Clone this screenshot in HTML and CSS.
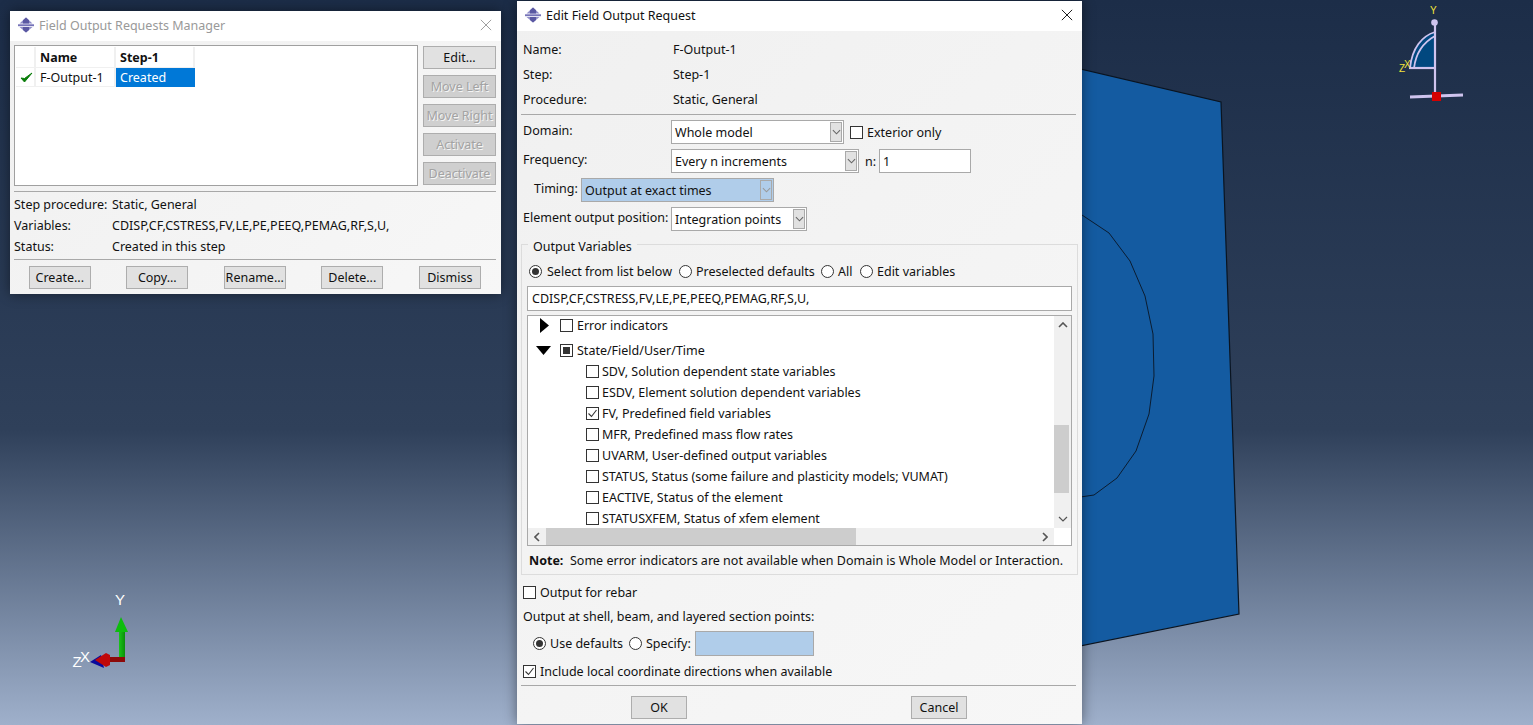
FILE: index.html
```html
<!DOCTYPE html>
<html lang="en">
<head>
    <meta charset="UTF-8">
    <title>Field Output Requests</title>
    <link rel="stylesheet" href="styles.css">
</head>
<body>

<svg width="0" height="0" class="defs">
    <symbol id="app-icon" viewBox="0 0 16 16">
        <path d="M8 0.5 L14.5 6.5 H1.5 Z" fill="#8f8dc8"/>
        <path d="M8 15.5 L14.5 10 H1.5 Z" fill="#8f8dc8"/>
        <path d="M8 0.5 L11 3.3 V6.5 H5 V3.3 Z" fill="#5a58a2"/>
        <path d="M8 15.5 L11 13 V10 H5 V13 Z" fill="#5a58a2"/>
        <rect x="0" y="7.3" width="16" height="1.9" fill="#7573b8"/>
    </symbol>
    <symbol id="chev-down" viewBox="0 0 10 6">
        <path d="M1 1 L5 5 L9 1" fill="none" stroke="currentColor" stroke-width="1.2"/>
    </symbol>
    <symbol id="chev-up" viewBox="0 0 10 6">
        <path d="M1 5 L5 1 L9 5" fill="none" stroke="currentColor" stroke-width="1.6"/>
    </symbol>
    <symbol id="chev-left" viewBox="0 0 6 10">
        <path d="M5 1 L1 5 L5 9" fill="none" stroke="currentColor" stroke-width="1.6"/>
    </symbol>
    <symbol id="chev-right" viewBox="0 0 6 10">
        <path d="M1 1 L5 5 L1 9" fill="none" stroke="currentColor" stroke-width="1.6"/>
    </symbol>
    <symbol id="tick" viewBox="0 0 11 11">
        <path d="M1.5 5.5 L4.5 8.5 L9.5 2" fill="none" stroke="#333" stroke-width="1.1"/>
    </symbol>
    <symbol id="cross" viewBox="0 0 14 14">
        <path d="M1 1 L13 13 M13 1 L1 13" fill="none" stroke="currentColor" stroke-width="1.1"/>
    </symbol>
    <linearGradient id="shaft" x1="0" x2="1" y1="0" y2="0">
        <stop offset="0" stop-color="#19c419"/>
        <stop offset="1" stop-color="#0a8f0a"/>
    </linearGradient>
</svg>

<!-- viewport: plate and the two triads -->
<svg class="viewport" width="1533" height="725" viewBox="0 0 1533 725">
    <polygon points="1000,50 1221,102 1239,614 1000,662" fill="#145ba1" stroke="#0a1420" stroke-width="1.2"/>
    <polyline points="1060,205 1082,215 1109,233 1130,261 1145,296 1153,334 1154,376 1149,414 1136,451 1117,478 1094,495 1060,500" fill="none" stroke="#0b1c30" stroke-width="1"/>

    <path d="M1410 68 C1412 48 1422 36 1435 32 V68 Z" fill="#01487f"/>
    <path d="M1410 68 C1412 48 1422 36 1435 32 M1414 68 C1416 52 1424 42 1435 36" fill="none" stroke="#cfc4ee" stroke-width="1.8"/>
    <path d="M1409 68 H1436" stroke="#cfc4ee" stroke-width="2.2"/>
    <path d="M1435 24 V96" stroke="#cfc4ee" stroke-width="2.2"/>
    <circle cx="1434.5" cy="22.5" r="3.3" fill="#cfc4ee"/>
    <path d="M1410 97 L1463 95" stroke="#cfc4ee" stroke-width="2.8"/>
    <rect x="1432" y="92" width="9" height="9" fill="#d40000"/>
    <text x="1430" y="14" class="axis-small">Y</text>
    <text x="1399" y="72" class="axis-small">Z</text>
    <text x="1404" y="68" class="axis-small">X</text>

    <path d="M119 630 H125 V660 H119 Z" fill="url(#shaft)"/>
    <path d="M121 617 L128 632 H115 Z" fill="#0dbd0d"/>
    <path d="M106 657 H125 V662 H106 Z" fill="#8c0a0a"/>
    <path d="M90 662 L101 655 L104 668 Z" fill="#0a0a9c"/>
    <path d="M95 660 L106 653 L110 655 V665 L106 667 Z" fill="#c00808"/>
    <text x="120" y="605" class="axis-big">Y</text>
    <text x="77" y="667" class="axis-big">Z</text>
    <text x="85" y="662" class="axis-big">X</text>
</svg>

<!-- manager window -->
<div class="win manager">
    <div class="titlebar inactive">
        <svg class="app-icon"><use href="#app-icon"/></svg>
        <span>Field Output Requests Manager</span>
        <svg class="close"><use href="#cross"/></svg>
    </div>
    <div class="win-body">
        <div class="mgr-top">
            <div class="mgr-table">
                <div class="mgr-row head">
                    <div class="cell c-flag"></div>
                    <div class="cell c-name">Name</div>
                    <div class="cell c-step">Step-1</div>
                </div>
                <div class="mgr-row">
                    <div class="cell c-flag">
                        <svg width="13" height="11" viewBox="0 0 13 11"><path d="M1 6 L4.5 10 L12 1 L4.5 6.5 Z" fill="#0a7d0a" stroke="#0a7d0a"/></svg>
                    </div>
                    <div class="cell c-name">F-Output-1</div>
                    <div class="cell c-step selected">Created</div>
                </div>
            </div>
            <div class="mgr-actions">
                <button class="btn">Edit...</button>
                <button class="btn off">Move Left</button>
                <button class="btn off">Move Right</button>
                <button class="btn off">Activate</button>
                <button class="btn off">Deactivate</button>
            </div>
        </div>
        <div class="sep"></div>
        <div class="mgr-info">
            <div class="info-row"><span class="info-label">Step procedure:</span><span>Static, General</span></div>
            <div class="info-row"><span class="info-label">Variables:</span><span>CDISP,CF,CSTRESS,FV,LE,PE,PEEQ,PEMAG,RF,S,U,</span></div>
            <div class="info-row"><span class="info-label">Status:</span><span>Created in this step</span></div>
        </div>
        <div class="sep"></div>
        <div class="mgr-buttons">
            <button class="btn">Create...</button>
            <button class="btn">Copy...</button>
            <button class="btn">Rename...</button>
            <button class="btn">Delete...</button>
            <button class="btn">Dismiss</button>
        </div>
    </div>
</div>

<!-- edit window -->
<div class="win editor">
    <div class="titlebar">
        <svg class="app-icon"><use href="#app-icon"/></svg>
        <span>Edit Field Output Request</span>
        <svg class="close"><use href="#cross"/></svg>
    </div>
    <div class="win-body">
        <div class="ed-info">
            <div class="ed-info-row"><span class="ed-label wide">Name:</span><span>F-Output-1</span></div>
            <div class="ed-info-row"><span class="ed-label wide">Step:</span><span>Step-1</span></div>
            <div class="ed-info-row"><span class="ed-label wide">Procedure:</span><span>Static, General</span></div>
        </div>
        <div class="sep"></div>

        <div class="ed-form">
            <div class="form-row">
                <span class="ed-label lift">Domain:</span>
                <div class="combo w-domain"><span>Whole model</span><i class="combo-arrow"><svg><use href="#chev-down"/></svg></i></div>
                <span class="cb exterior"></span><span>Exterior only</span>
            </div>
            <div class="form-row">
                <span class="ed-label lift">Frequency:</span>
                <div class="combo w-freq"><span>Every n increments</span><i class="combo-arrow"><svg><use href="#chev-down"/></svg></i></div>
                <span class="n-label">n:</span>
                <div class="field w-n">1</div>
            </div>
            <div class="form-row">
                <span class="timing-label lift">Timing:</span>
                <div class="combo w-timing blocked"><span>Output at exact times</span><i class="combo-arrow"><svg><use href="#chev-down"/></svg></i></div>
            </div>
            <div class="form-row">
                <span class="ed-label lift">Element output position:</span>
                <div class="combo w-pos"><span>Integration points</span><i class="combo-arrow"><svg><use href="#chev-down"/></svg></i></div>
            </div>
        </div>

        <div class="group">
            <div class="group-title">Output Variables</div>
            <div class="radio-row">
                <span class="radio on"></span><span class="opt">Select from list below</span>
                <span class="radio"></span><span class="opt">Preselected defaults</span>
                <span class="radio"></span><span class="opt">All</span>
                <span class="radio"></span><span class="opt">Edit variables</span>
            </div>
            <div class="field w-vars">CDISP,CF,CSTRESS,FV,LE,PE,PEEQ,PEMAG,RF,S,U,</div>
            <div class="list">
                <div class="tree">
                    <div class="tree-head first">
                        <span class="tw"><svg width="9" height="15" viewBox="0 0 9 15"><path d="M0 0 L9 7.5 L0 15 Z"/></svg></span>
                        <span class="cb"></span><span>Error indicators</span>
                    </div>
                    <div class="tree-head second">
                        <span class="tw"><svg width="15" height="9" viewBox="0 0 15 9"><path d="M0 0 H15 L7.5 9 Z"/></svg></span>
                        <span class="cb partial"></span><span>State/Field/User/Time</span>
                    </div>
                    <div class="tree-item"><span class="cb"></span><span>SDV, Solution dependent state variables</span></div>
                    <div class="tree-item"><span class="cb"></span><span>ESDV, Element solution dependent variables</span></div>
                    <div class="tree-item"><span class="cb"><svg><use href="#tick"/></svg></span><span>FV, Predefined field variables</span></div>
                    <div class="tree-item"><span class="cb"></span><span>MFR, Predefined mass flow rates</span></div>
                    <div class="tree-item"><span class="cb"></span><span>UVARM, User-defined output variables</span></div>
                    <div class="tree-item"><span class="cb"></span><span>STATUS, Status (some failure and plasticity models; VUMAT)</span></div>
                    <div class="tree-item"><span class="cb"></span><span>EACTIVE, Status of the element</span></div>
                    <div class="tree-item"><span class="cb"></span><span>STATUSXFEM, Status of xfem element</span></div>
                </div>
                <div class="vscroll">
                    <svg class="arr-v"><use href="#chev-up"/></svg>
                    <div class="vtrack"><div class="vthumb"></div></div>
                    <svg class="arr-v"><use href="#chev-down"/></svg>
                </div>
                <div class="hscroll">
                    <svg class="arr-h"><use href="#chev-left"/></svg>
                    <div class="htrack"><div class="hthumb"></div></div>
                    <svg class="arr-h"><use href="#chev-right"/></svg>
                </div>
            </div>
            <div class="note"><b>Note:</b><span>Some error indicators are not available when Domain is Whole Model or Interaction.</span></div>
        </div>

        <div class="check-row rebar"><span class="cb"></span><span>Output for rebar</span></div>
        <div class="shell-label">Output at shell, beam, and layered section points:</div>
        <div class="shell-row">
            <span class="radio on"></span><span class="opt">Use defaults</span>
            <span class="radio"></span><span class="opt-tight">Specify:</span>
            <div class="field w-specify blocked"></div>
        </div>
        <div class="check-row local"><span class="cb"><svg><use href="#tick"/></svg></span><span>Include local coordinate directions when available</span></div>
        <div class="sep"></div>
        <div class="ed-buttons">
            <button class="btn">OK</button>
            <button class="btn">Cancel</button>
        </div>
    </div>
</div>

</body>
</html>
```

FILE: styles.css
```css
* {
    box-sizing: border-box;
}
html, body {
    margin: 0;
    height: 100%;
}
body {
    width: 1533px;
    height: 725px;
    overflow: hidden;
    position: relative;
    font-family: "Noto Sans", sans-serif;
    font-size: 12.5px;
    color: #111;
    background: linear-gradient(180deg, #1c2d48 0px, #2f405a 430px, #9fb0cb 725px);
}
.defs {
    position: absolute;
}
.viewport {
    position: absolute;
    left: 0;
    top: 0;
}
.axis-small {
    font-family: "Liberation Sans", sans-serif;
    font-size: 10px;
    fill: #f2e33a;
}
.axis-big {
    font-family: "Liberation Sans", sans-serif;
    font-size: 15px;
    fill: #fff;
    text-anchor: middle;
}

/* windows */
.win {
    position: absolute;
    display: flex;
    flex-direction: column;
    background: linear-gradient(135deg, #f0f0f0, #f7f7f7);
    box-shadow: 0 0 12px rgba(0, 0, 0, 0.45);
}
.manager {
    left: 10px;
    top: 11px;
    width: 491px;
    height: 283px;
}
.editor {
    left: 517px;
    top: 1px;
    width: 565px;
    height: 723px;
}
.titlebar {
    height: 30px;
    background: white;
    display: flex;
    align-items: center;
    flex: none;
    padding: 0 8px 2px;
    font-size: 12.5px;
}
.titlebar.inactive {
    color: #999;
}
.app-icon {
    width: 16px;
    height: 16px;
    margin-right: 5px;
    flex: none;
}
.close {
    margin-left: auto;
    width: 12px;
    height: 12px;
    margin-right: 1px;
    color: #111;
}
.inactive .close {
    color: #999;
}
.sep {
    height: 1px;
    background: #a8a8a8;
}
.btn {
    display: block;
    height: 23px;
    padding: 0;
    border: 1px solid #adadad;
    background: #e1e1e1;
    font-family: inherit;
    font-size: 12.5px;
    color: #111;
}
.btn.off {
    color: #a3a3a3;
    background: #cfcfcf;
    text-shadow: 1px 1px 0 #f5f5f5;
}

/* manager */
.manager .win-body {
    padding: 4px 5px 0 4px;
}
.mgr-top {
    display: flex;
    justify-content: space-between;
    margin-bottom: 5px;
}
.mgr-table {
    width: 404px;
    height: 141px;
    border: 1px solid #a0a0a0;
    background: white;
    padding: 1px 1px;
}
.mgr-row {
    display: flex;
    height: 19px;
}
.mgr-row.head {
    height: 21px;
    font-weight: bold;
}
.cell {
    padding-left: 4px;
    display: flex;
    align-items: center;
    border-right: 2px solid #f0f0f0;
    border-bottom: 1px solid #f0f0f0;
}
.c-flag {
    width: 20px;
}
.c-name {
    width: 80px;
}
.c-step {
    width: 79px;
}
.c-step.selected {
    background: #0078d7;
    color: white;
    border: none;
}
.mgr-actions {
    width: 73px;
    display: flex;
    flex-direction: column;
    gap: 6px;
    padding-top: 1px;
}
.mgr-info {
    padding: 2px 0;
}
.info-row {
    height: 21px;
    display: flex;
    align-items: center;
}
.info-label {
    width: 98px;
}
.mgr-buttons {
    display: flex;
    justify-content: space-between;
    padding: 6px 15.2px 0 14.8px;
}
.mgr-buttons .btn {
    width: 62px;
}

/* editor */
.editor .win-body {
    padding: 6px 6px 0 6px;
}
.editor .sep {
    margin: 0 0 0 -2px;
    width: 555px;
}
.ed-info-row {
    height: 25px;
    display: flex;
    align-items: center;
}
.ed-info {
    margin-bottom: 2px;
}
.ed-label {
    width: 148px;
    flex: none;
}
.ed-label.wide {
    width: 150px;
}
.ed-form {
    padding-top: 5px;
    display: flex;
    flex-direction: column;
    gap: 5px;
}
.form-row {
    display: flex;
    align-items: center;
    height: 24px;
}
.lift {
    padding-bottom: 4px;
}
.timing-label {
    width: 47px;
    margin-left: 11px;
    flex: none;
}
.combo, .field {
    background: white;
    border: 1px solid #a9a9a9;
    display: flex;
    align-items: center;
    height: 24px;
    padding-left: 3px;
}
.combo {
    justify-content: space-between;
    padding-right: 1px;
}
.combo-arrow {
    width: 12px;
    height: 20px;
    background: #e1e1e1;
    border: 1px solid #a9a9a9;
    color: #666;
    display: flex;
    align-items: center;
    justify-content: center;
}
.combo-arrow svg {
    width: 9px;
    height: 6px;
}
.blocked {
    background: #b0cdea;
}
.blocked .combo-arrow {
    background: #b0cdea;
    color: #999;
}
.w-domain {
    width: 173px;
}
.w-freq {
    width: 188px;
}
.w-timing {
    width: 193px;
}
.w-pos {
    width: 136px;
}
.w-n {
    width: 92px;
}
.n-label {
    margin: 0 3px 0 6px;
}
.exterior {
    margin: 0 5px 0 6px;
}

/* checks and radios */
.cb {
    width: 13px;
    height: 13px;
    border: 1px solid #333;
    background: white;
    flex: none;
    display: inline-block;
    margin-right: 4px;
    position: relative;
}
.cb svg {
    display: block;
    width: 11px;
    height: 11px;
}
.cb.partial::after {
    content: "";
    position: absolute;
    left: 2px;
    top: 2px;
    width: 7px;
    height: 7px;
    background: #333;
}
.radio {
    width: 13px;
    height: 13px;
    border: 1px solid #333;
    border-radius: 50%;
    background: white;
    flex: none;
    display: flex;
    align-items: center;
    justify-content: center;
}
.radio.on::after {
    content: "";
    width: 7px;
    height: 7px;
    border-radius: 50%;
    background: #333;
}
.opt {
    margin: 0 6px 0 4px;
}
.opt-tight {
    margin: 0 4px 0 4px;
}

/* group */
.group {
    position: relative;
    margin: 13px 0 0 -2px;
    width: 557px;
    height: 331px;
    border: 1px solid #dcdcdc;
    padding: 17px 5px 0;
}
.group-title {
    position: absolute;
    left: 6px;
    top: -5px;
    padding: 0 5px;
    line-height: 14px;
    background: #f2f2f2;
}
.radio-row {
    display: grid;
    grid-template-columns: 13px 137px 13px 129px 13px 26px 13px auto;
    align-items: center;
    height: 19px;
    padding-left: 2px;
}
.radio-row .opt {
    margin: 0 0 0 4px;
}
.radio-row .radio.on + .opt {
    margin-left: 5px;
}
.w-vars {
    width: 545px;
    height: 25px;
    margin-top: 5px;
    padding-left: 4px;
}
.list {
    width: 545px;
    height: 231px;
    margin-top: 4px;
    border: 1px solid #a9a9a9;
    background: white;
    display: grid;
    grid-template-columns: 1fr 17px;
    grid-template-rows: 1fr 17px;
}
.tree {
    overflow: hidden;
    grid-column: 1;
    grid-row: 1;
}
.tree-head {
    display: flex;
    align-items: center;
    height: 19px;
}
.tree-head.second {
    margin: 6px 0 1px;
}
.tw {
    width: 32px;
    flex: none;
    display: flex;
    justify-content: center;
    padding-right: 2px;
}
.first .tw {
    padding-right: 0;
}
.tree-item {
    display: flex;
    align-items: center;
    height: 21px;
    padding-left: 58px;
    white-space: nowrap;
}
.tree-item .cb {
    margin-right: 3px;
}
.vscroll {
    grid-column: 2;
    grid-row: 1;
    background: #f0f0f0;
    display: flex;
    flex-direction: column;
    color: #555;
}
.arr-v {
    width: 10px;
    height: 6px;
    margin: 6px auto;
    flex: none;
    overflow: visible;
}
.vtrack {
    flex: 1;
    padding-top: 91px;
}
.vthumb {
    width: 15px;
    height: 68px;
    background: #cdcdcd;
}
.hscroll {
    grid-column: 1;
    grid-row: 2;
    background: #f0f0f0;
    display: flex;
    align-items: center;
    color: #555;
}
.arr-h {
    width: 6px;
    height: 10px;
    margin: 0 6px;
    flex: none;
}
.htrack {
    flex: 1;
    height: 100%;
}
.hthumb {
    width: 310px;
    height: 100%;
    background: #cdcdcd;
}
.note {
    display: flex;
    align-items: center;
    height: 28px;
    padding-left: 2px;
}
.note b {
    width: 41px;
    flex: none;
}

/* below the group */
.check-row {
    display: flex;
    align-items: center;
    height: 18px;
}
.rebar {
    margin-top: 8px;
}
.shell-label {
    height: 18px;
    line-height: 18px;
    margin-top: 7px;
}
.shell-row {
    display: flex;
    align-items: center;
    height: 25px;
    margin-top: 5px;
    padding-left: 10px;
}
.w-specify {
    width: 119px;
    height: 25px;
}
.local {
    margin-top: 6px;
}
.editor .local + .sep {
    margin-top: 5px;
}
.ed-buttons {
    display: flex;
    padding: 10px 0 0 108px;
    gap: 224px;
}
.ed-buttons .btn {
    width: 56px;
}
```
